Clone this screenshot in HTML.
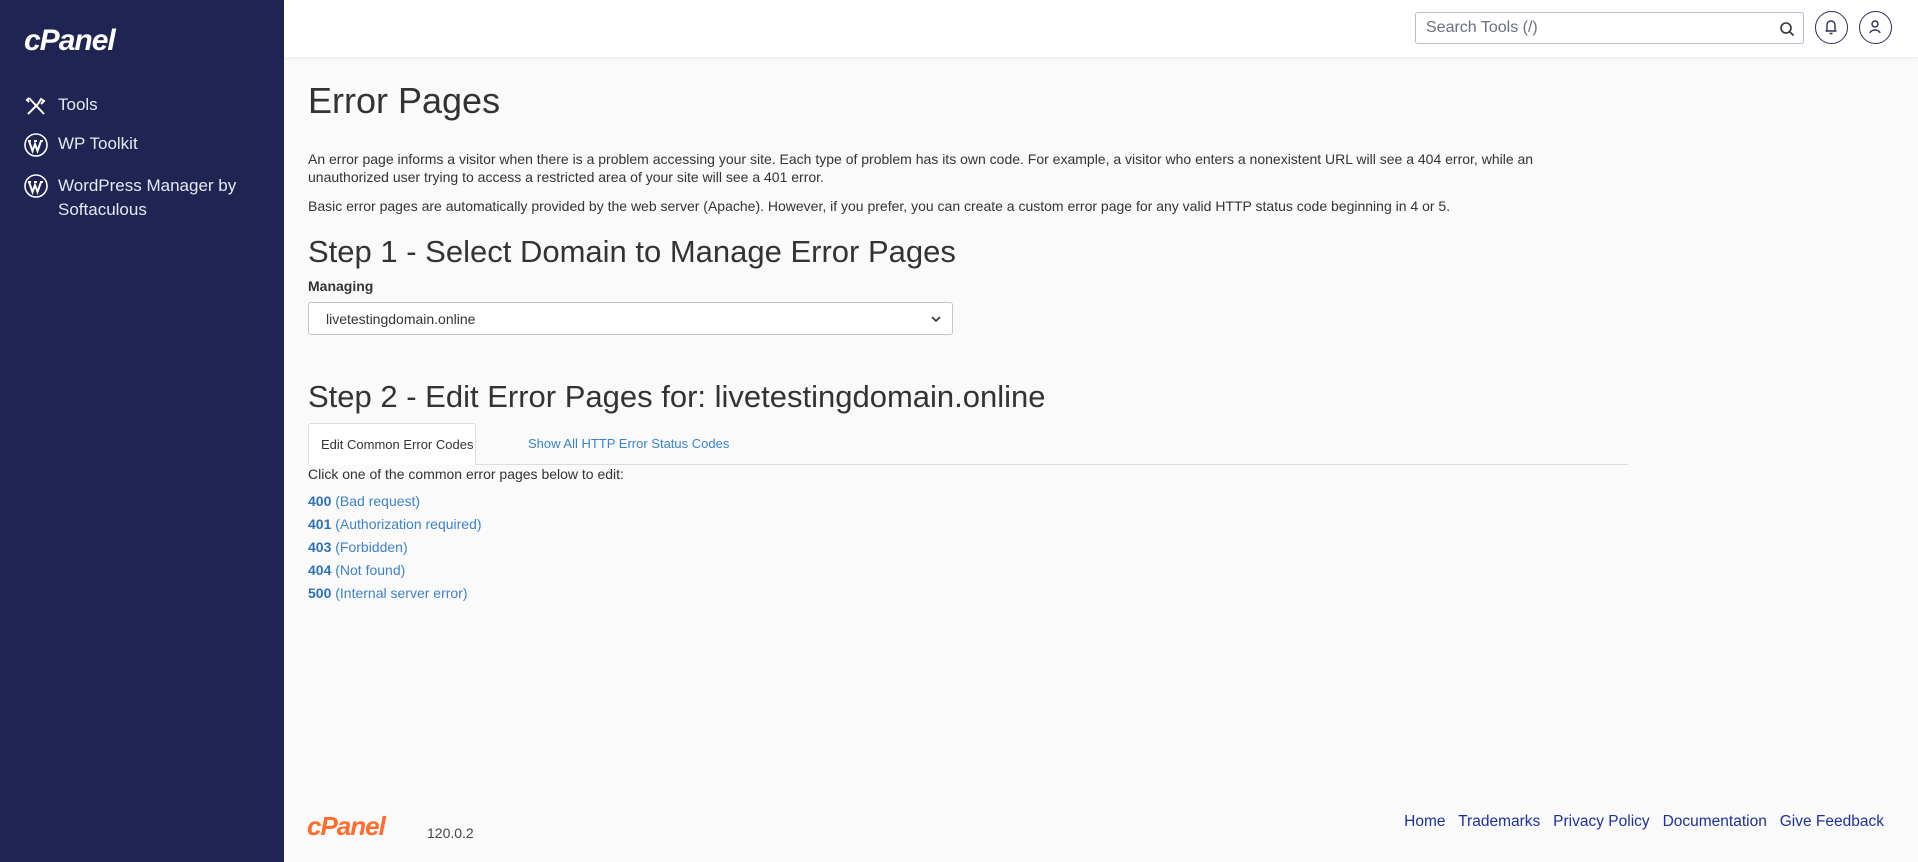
<!DOCTYPE html>
<html><head><meta charset="utf-8"><style>
*{box-sizing:border-box;margin:0;padding:0}
body{width:1918px;height:862px;overflow:hidden;font-family:"Liberation Sans",sans-serif;background:#fafafa;color:#333;position:relative}
.side{position:absolute;left:0;top:0;width:284px;height:862px;background:#1f2452;color:#e6e8f2}
.logo{position:absolute;left:24px;top:24px;font:italic bold 30px "Liberation Sans",sans-serif;color:#fff;letter-spacing:-1px}
.nav{position:absolute;left:24px;font-size:17px;color:#e6e8f2;display:flex;align-items:flex-start}
.nav svg{width:24px;height:24px;margin-right:10px;flex:none}
.hdr{position:absolute;left:284px;top:0;right:0;height:57px;background:#fff;box-shadow:0 1px 4px rgba(0,0,0,.08)}
.search{position:absolute;left:1415px;top:12px;width:389px;height:32px;border:1px solid #b8bccf;border-radius:3px;background:#fff;font-size:16px;color:#6b6f80;padding:6px 10px}
.circ{position:absolute;top:11px;width:33px;height:33px;border:1.5px solid #2b2f5a;border-radius:50%}
h1{position:absolute;left:308px;top:80px;font-weight:300;font-size:36px;color:#333;white-space:nowrap}
p{position:absolute;left:308px;font-size:14px;line-height:18px;width:1300px}
h2{position:absolute;left:308px;font-weight:normal;font-size:31px;color:#333;white-space:nowrap}
.lbl{position:absolute;left:308px;top:278px;font-size:14px;font-weight:bold}
.sel{position:absolute;left:308px;top:302px;width:645px;height:33px;border:1px solid #c5c5c5;border-radius:3px;background:#fff;font-size:14px;padding:8px 17px}
.tabline{position:absolute;left:308px;top:464px;width:1320px;border-top:1px solid #ddd}
.tab{position:absolute;top:423px;height:42px;font-size:13px;padding:13px 14px;white-space:nowrap}
.t1{left:308px;width:168px;background:#fff;border:1px solid #ddd;border-bottom:none;border-radius:3px 3px 0 0;padding:13px 12px}
.t2{left:514px;color:#3d82c8;padding-left:14px}
.lk{position:absolute;left:308px;font-size:14px;color:#3d82c8}
.lk b{color:#2d72b8}
.foot{position:absolute;top:813px;font-size:15.5px;color:#1f2f9a;white-space:nowrap}
</style></head><body>
<div class="side">
<div class="logo">cPanel</div>
<div class="nav" style="top:94px"><svg viewBox="0 0 24 24" fill="none" stroke="#fff" stroke-width="2"><path d="M4 20L14 10M14 10l3-5 3 2-3 3M5 4l15 16M5 4l-2 2 2 2"/></svg><span style="line-height:22px">Tools</span></div>
<div class="nav" style="top:133px"><svg viewBox="0 0 24 24"><circle cx="12" cy="12" r="11" fill="none" stroke="#fff" stroke-width="1.6"/><path d="M5 8l3.5 10 2.5-7 2.5 7L17 8M4 8h3M10 8h3M16 8h3" stroke="#fff" stroke-width="2" fill="none"/></svg><span style="line-height:22px">WP Toolkit</span></div>
<div class="nav" style="top:174px"><svg viewBox="0 0 24 24"><circle cx="12" cy="12" r="11" fill="none" stroke="#fff" stroke-width="1.6"/><path d="M5 8l3.5 10 2.5-7 2.5 7L17 8M4 8h3M10 8h3M16 8h3" stroke="#fff" stroke-width="2" fill="none"/></svg><span style="line-height:24px">WordPress Manager by<br>Softaculous</span></div>
</div>
<div class="hdr"></div>
<div class="search">Search Tools (/)<svg style="position:absolute;right:8px;top:8px" width="16" height="16" viewBox="0 0 16 16" fill="none" stroke="#333" stroke-width="1.6"><circle cx="7" cy="7" r="5"/><path d="M11 11l3.5 3.5"/></svg></div>
<div class="circ" style="left:1815px"><svg width="30" height="30" viewBox="0 0 30 30" fill="none" stroke="#2b2f5a" stroke-width="1.4"><path d="M11 19V13a4 4 0 018 0v6M9.5 19h11M13.5 21.5h3"/></svg></div>
<div class="circ" style="left:1859px"><svg width="30" height="30" viewBox="0 0 30 30" fill="none" stroke="#2b2f5a" stroke-width="1.4"><circle cx="15" cy="12" r="3"/><path d="M10 21c1-4 9-4 10 0"/></svg></div>
<h1>Error Pages</h1>
<p style="top:150px">An error page informs a visitor when there is a problem accessing your site. Each type of problem has its own code. For example, a visitor who enters a nonexistent URL will see a 404 error, while an unauthorized user trying to access a restricted area of your site will see a 401 error.</p>
<p style="top:197px">Basic error pages are automatically provided by the web server (Apache). However, if you prefer, you can create a custom error page for any valid HTTP status code beginning in 4 or 5.</p>
<h2 style="top:234px">Step 1 - Select Domain to Manage Error Pages</h2>
<div class="lbl">Managing</div>
<div class="sel">livetestingdomain.online<svg style="position:absolute;right:10px;top:12px" width="12" height="8" viewBox="0 0 12 8" fill="none" stroke="#333" stroke-width="1.6"><path d="M2 2l4 4 4-4"/></svg></div>
<h2 style="top:379px">Step 2 - Edit Error Pages for: livetestingdomain.online</h2>
<div class="tabline"></div>
<div class="tab t1">Edit Common Error Codes</div>
<div class="tab t2">Show All HTTP Error Status Codes</div>
<p style="top:465px">Click one of the common error pages below to edit:</p>
<div class="lk" style="top:493px"><b>400</b> (Bad request)</div>
<div class="lk" style="top:516px"><b>401</b> (Authorization required)</div>
<div class="lk" style="top:539px"><b>403</b> (Forbidden)</div>
<div class="lk" style="top:562px"><b>404</b> (Not found)</div>
<div class="lk" style="top:585px"><b>500</b> (Internal server error)</div>
<div style="position:absolute;left:307px;top:811px;font:italic bold 26px 'Liberation Sans',sans-serif;color:#ff6c2c;letter-spacing:-1px">cPanel</div>
<div style="position:absolute;left:427px;top:825px;font-size:14px;color:#444">120.0.2</div>
<div class="foot" style="right:34px">Home&nbsp;&nbsp; Trademarks&nbsp;&nbsp; Privacy Policy&nbsp;&nbsp; Documentation&nbsp;&nbsp; Give Feedback</div>
</body></html>
